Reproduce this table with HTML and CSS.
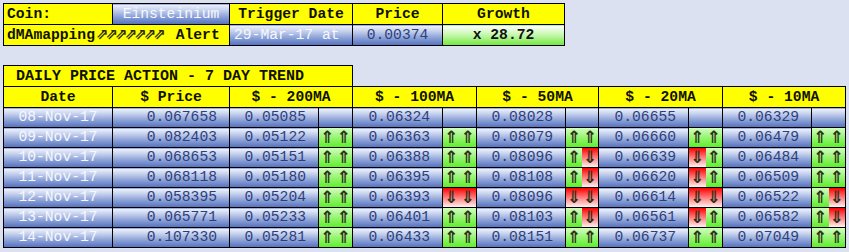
FILE: index.html
```html
<!DOCTYPE html>
<html>
<head>
<meta charset="utf-8">
<link rel="stylesheet" href="styles.css">
</head>
<body>
<div class="page">
  <table class="info">
    <colgroup>
      <col class="w109"><col class="w117"><col class="w123"><col class="w90"><col class="w122">
    </colgroup>
    <tr>
      <td class="yel lbl">Coin:</td>
      <td class="blue light c">Einsteinium</td>
      <td class="yel hd c">Trigger Date</td>
      <td class="yel hd c">Price</td>
      <td class="yel hd c">Growth</td>
    </tr>
    <tr>
      <td class="yel lbl" colspan="2">dMAmapping<span class="ne">⇗⇗⇗⇗⇗⇗⇗</span> Alert</td>
      <td class="blue light l">29-Mar-17 at</td>
      <td class="blue val c">0.00374</td>
      <td class="growth c">x 28.72</td>
    </tr>
  </table>

  <table class="trend">
    <colgroup>
      <col class="w109"><col class="w117">
      <col class="w89"><col class="w34">
      <col class="w90"><col class="w34">
      <col class="w89"><col class="w33">
      <col class="w90"><col class="w34">
      <col class="w89"><col class="w34">
    </colgroup>
    <tr class="title-row">
      <td class="yel hd title" colspan="4">DAILY PRICE ACTION - 7 DAY TREND</td>
      <td class="empty" colspan="8"></td>
    </tr>
    <tr class="head-row">
      <td class="yel hd c">Date</td>
      <td class="yel hd c">$ Price</td>
      <td class="yel hd c" colspan="2">$ - 200MA</td>
      <td class="yel hd c" colspan="2">$ - 100MA</td>
      <td class="yel hd c" colspan="2">$ - 50MA</td>
      <td class="yel hd c" colspan="2">$ - 20MA</td>
      <td class="yel hd c" colspan="2">$ - 10MA</td>
    </tr>
    <tr>
      <td class="blue light c">08-Nov-17</td>
      <td class="blue val r">0.067658</td>
      <td class="blue val r">0.05085</td><td class="blue"></td>
      <td class="blue val r">0.06324</td><td class="blue"></td>
      <td class="blue val r">0.08028</td><td class="blue"></td>
      <td class="blue val r">0.06655</td><td class="blue"></td>
      <td class="blue val r">0.06329</td><td class="blue"></td>
    </tr>
    <tr>
      <td class="blue light c">09-Nov-17</td>
      <td class="blue val r">0.082403</td>
      <td class="blue val r">0.05122</td><td class="arr"><div class="pair"><span class="up">⇑</span><span class="up">⇑</span></div></td>
      <td class="blue val r">0.06363</td><td class="arr"><div class="pair"><span class="up">⇑</span><span class="up">⇑</span></div></td>
      <td class="blue val r">0.08079</td><td class="arr"><div class="pair"><span class="up">⇑</span><span class="up">⇑</span></div></td>
      <td class="blue val r">0.06660</td><td class="arr"><div class="pair"><span class="up">⇑</span><span class="up">⇑</span></div></td>
      <td class="blue val r">0.06479</td><td class="arr"><div class="pair"><span class="up">⇑</span><span class="up">⇑</span></div></td>
    </tr>
    <tr>
      <td class="blue light c">10-Nov-17</td>
      <td class="blue val r">0.068653</td>
      <td class="blue val r">0.05151</td><td class="arr"><div class="pair"><span class="up">⇑</span><span class="up">⇑</span></div></td>
      <td class="blue val r">0.06388</td><td class="arr"><div class="pair"><span class="up">⇑</span><span class="up">⇑</span></div></td>
      <td class="blue val r">0.08096</td><td class="arr"><div class="pair"><span class="up">⇑</span><span class="dn">⇓</span></div></td>
      <td class="blue val r">0.06639</td><td class="arr"><div class="pair"><span class="dn">⇓</span><span class="up">⇑</span></div></td>
      <td class="blue val r">0.06484</td><td class="arr"><div class="pair"><span class="up">⇑</span><span class="up">⇑</span></div></td>
    </tr>
    <tr>
      <td class="blue light c">11-Nov-17</td>
      <td class="blue val r">0.068118</td>
      <td class="blue val r">0.05180</td><td class="arr"><div class="pair"><span class="up">⇑</span><span class="up">⇑</span></div></td>
      <td class="blue val r">0.06395</td><td class="arr"><div class="pair"><span class="up">⇑</span><span class="up">⇑</span></div></td>
      <td class="blue val r">0.08108</td><td class="arr"><div class="pair"><span class="up">⇑</span><span class="dn">⇓</span></div></td>
      <td class="blue val r">0.06620</td><td class="arr"><div class="pair"><span class="dn">⇓</span><span class="up">⇑</span></div></td>
      <td class="blue val r">0.06509</td><td class="arr"><div class="pair"><span class="up">⇑</span><span class="up">⇑</span></div></td>
    </tr>
    <tr>
      <td class="blue light c">12-Nov-17</td>
      <td class="blue val r">0.058395</td>
      <td class="blue val r">0.05204</td><td class="arr"><div class="pair"><span class="up">⇑</span><span class="up">⇑</span></div></td>
      <td class="blue val r">0.06393</td><td class="arr"><div class="pair"><span class="dn">⇓</span><span class="dn">⇓</span></div></td>
      <td class="blue val r">0.08096</td><td class="arr"><div class="pair"><span class="dn">⇓</span><span class="dn">⇓</span></div></td>
      <td class="blue val r">0.06614</td><td class="arr"><div class="pair"><span class="dn">⇓</span><span class="dn">⇓</span></div></td>
      <td class="blue val r">0.06522</td><td class="arr"><div class="pair"><span class="up">⇑</span><span class="dn">⇓</span></div></td>
    </tr>
    <tr>
      <td class="blue light c">13-Nov-17</td>
      <td class="blue val r">0.065771</td>
      <td class="blue val r">0.05233</td><td class="arr"><div class="pair"><span class="up">⇑</span><span class="up">⇑</span></div></td>
      <td class="blue val r">0.06401</td><td class="arr"><div class="pair"><span class="up">⇑</span><span class="up">⇑</span></div></td>
      <td class="blue val r">0.08103</td><td class="arr"><div class="pair"><span class="up">⇑</span><span class="dn">⇓</span></div></td>
      <td class="blue val r">0.06561</td><td class="arr"><div class="pair"><span class="dn">⇓</span><span class="up">⇑</span></div></td>
      <td class="blue val r">0.06582</td><td class="arr"><div class="pair"><span class="up">⇑</span><span class="dn">⇓</span></div></td>
    </tr>
    <tr>
      <td class="blue light c">14-Nov-17</td>
      <td class="blue val r">0.107330</td>
      <td class="blue val r">0.05281</td><td class="arr"><div class="pair"><span class="up">⇑</span><span class="up">⇑</span></div></td>
      <td class="blue val r">0.06433</td><td class="arr"><div class="pair"><span class="up">⇑</span><span class="up">⇑</span></div></td>
      <td class="blue val r">0.08151</td><td class="arr"><div class="pair"><span class="up">⇑</span><span class="up">⇑</span></div></td>
      <td class="blue val r">0.06737</td><td class="arr"><div class="pair"><span class="up">⇑</span><span class="up">⇑</span></div></td>
      <td class="blue val r">0.07049</td><td class="arr"><div class="pair"><span class="up">⇑</span><span class="up">⇑</span></div></td>
    </tr>
  </table>
</div>
</body>
</html>
```

FILE: styles.css
```css
html, body {
  margin: 0;
  padding: 0;
  background: #dce1f1;
}
.page {
  padding: 3px 0 0 3px;
  display: flex;
  flex-direction: column;
  gap: 19px;
  align-items: flex-start;
  font-family: "Liberation Mono", "Courier New", monospace;
  font-size: 14.67px;
}
table {
  border-collapse: collapse;
  table-layout: fixed;
}
.info { width: 562px; }
.trend { width: 843px; }
td {
  border: 1px solid #000;
  padding: 0;
  white-space: nowrap;
  overflow: hidden;
  line-height: 17px;
}
.info tr { height: 21px; }
.trend tr { height: 20px; }
.trend tr.title-row, .trend tr.head-row { height: 21px; }
.w109 { width: 109px; }
.w117 { width: 117px; }
.w123 { width: 123px; }
.w122 { width: 122px; }
.w90 { width: 90px; }
.w89 { width: 89px; }
.w34 { width: 34px; }
.w33 { width: 33px; }

.yel { background: #ffff00; color: #111100; }
.hd { font-weight: bold; }
.lbl { font-weight: bold; padding-left: 3px; }
.c { text-align: center; }
.l { text-align: left; padding-left: 4px; }
.r { text-align: right; padding-right: 12px; }
.title { padding-left: 12px; text-align: left; font-size: 15px; }
.empty { border: none; background: transparent; }

.blue {
  background: linear-gradient(to bottom, #f0f3fa 0%, #cbd5ef 25%, #8aa0d6 62%, #5270bf 100%);
}
.light { color: #f6f8ff; }
.val { color: #2d3f7c; }
.growth {
  background: linear-gradient(to bottom, #ffffff 0%, #c8f8b0 45%, #6fe83c 100%);
  color: #111;
  font-weight: bold;
}
.ne {
  font-family: "DejaVu Sans", sans-serif;
  font-weight: bold;
  font-size: 15px;
  color: #2a2a10;
  letter-spacing: -3px;
  margin-left: 1px;
  margin-right: 4px;
}
.arr { padding: 0; }
.pair {
  display: flex;
  height: 19px;
}
.pair span {
  flex: 1;
  text-align: center;
  font-family: "DejaVu Sans", sans-serif;
  font-weight: bold;
  font-size: 17px;
  line-height: 19px;
  color: #2e3018;
}
.up {
  background: linear-gradient(to bottom, #d4fdc0 0%, #9cf57a 45%, #5fee2c 100%);
}
.dn {
  background: linear-gradient(to bottom, #ff0000 0%, #ff7070 45%, #fff0f0 100%);
}
```
